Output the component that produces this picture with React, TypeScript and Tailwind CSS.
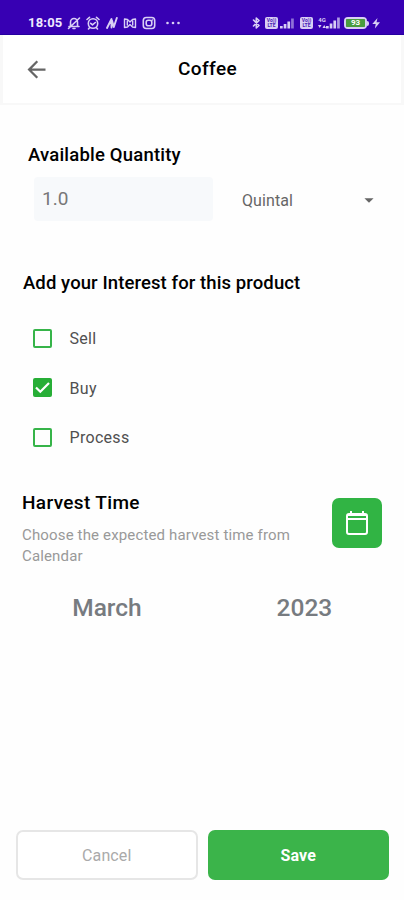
import { useState } from "react"
import type { ReactNode } from "react"
import { MdArrowBack, MdArrowDropDown } from "react-icons/md"

type InterestType = "Sell" | "Buy" | "Process"

const interests: InterestType[] = ["Sell", "Buy", "Process"]

const Glyph = ({ w, className = "", children }: { w: number; className?: string; children: ReactNode }) => (
    <svg
        width={w}
        height={14}
        viewBox={`0 0 ${w} 14`}
        fill="none"
        stroke="currentColor"
        strokeWidth={1.6}
        strokeLinecap="round"
        strokeLinejoin="round"
        className={`shrink-0 ${className}`}
    >
        {children}
    </svg>
)

const VoLte = ({ className = "" }: { className?: string }) => (
    <div className={`w-[13px] h-3 shrink-0 rounded-[2px] bg-[#d9cff5] text-[#4a20b4] flex flex-col items-center justify-center text-[5px] leading-[5px] font-bold ${className}`}>
        <span>Vo))</span>
        <span>LTE</span>
    </div>
)

const StatusBar = () => (
    <div className="h-[35px] bg-[#3700b3] border-b border-[#2500a0] text-[#d9cff5] flex items-center pl-7 pr-[24px] pt-[12px]">
        <span className="w-[35px] text-[13px] leading-4 font-bold tracking-[0.2px] text-[#eee8ff]">18:05</span>
        <Glyph w={14} className="ml-[4px]">
            <path d="M3.500 10.500V6a3.500 3.500 0 0 1 7 0v4.500M2 10.500h10M6 12.500h2M1.500 12.500 12.500 2" />
        </Glyph>
        <Glyph w={14} className="ml-[5px]">
            <circle cx="7" cy="7.500" r="4.700" />
            <path d="M1 3.500 3.500 1.300M13 3.500 10.500 1.300M4.700 7.300l1.800 1.500 2.800-2.300M3.500 11.800l-1 1.200M10.500 11.800l1 1.200" />
        </Glyph>
        <Glyph w={12} className="ml-[6px]">
            <path d="M1 12 5.500 3v8.500M6 4.500l1.800 6.500L10.800 2" strokeWidth="1.900" />
        </Glyph>
        <Glyph w={14} className="ml-[5px]">
            <path d="M1.500 3v8.500l3-.5L7 8.500 9.500 11l3 .5V3l-3 .5L7 6 4.500 3.500zM4.300 5v4M9.700 5v4" strokeWidth="1.400" />
        </Glyph>
        <Glyph w={14} className="ml-[5px]">
            <rect x="1.300" y="1.500" width="11.400" height="11" rx="3" />
            <rect x="4.200" y="4.300" width="5.600" height="5.400" rx="2" />
            <path d="M10.300 4h.1" />
        </Glyph>
        <Glyph w={16} className="ml-[9px]">
            <g fill="currentColor" stroke="none">
                <circle cx="2.500" cy="7" r="1.300" />
                <circle cx="8" cy="7" r="1.300" />
                <circle cx="13.500" cy="7" r="1.300" />
            </g>
        </Glyph>
        <Glyph w={9} className="ml-auto">
            <path d="m1.500 4 5.500 5.500L4.300 12V2L7 4.500 1.500 10" />
        </Glyph>
        <VoLte className="ml-[4px]" />
        <Glyph w={15} className="ml-[2px]">
            <g fill="currentColor" stroke="none">
                <path d="M0 10h2.700v2.500H0zM3.700 8h2.700v4.500H3.700zM7.400 5.500h2.700v7H7.400z" />
                <path d="M11.100 2.500h2.700v10h-2.700z" opacity=".55" />
            </g>
        </Glyph>
        <VoLte className="ml-[5px]" />
        <div className="ml-[5px] w-[8px] h-3 flex flex-col items-center">
            <span className="text-[6px] leading-[6px] font-bold">4G</span>
            <svg width={8} height={6} viewBox="0 0 8 6" fill="currentColor">
                <path d="M0 2h3.500L1.700 5zM4.500 5H8L6.200 2z" />
            </svg>
        </div>
        <Glyph w={14}>
            <g fill="currentColor" stroke="none">
                <path d="M0 10h2.700v2.500H0zM3.700 7.500h2.700v5H3.700zM7.400 4.500h2.700v8H7.400z" />
                <path d="M11.100 1.500h2.700v11h-2.700z" opacity=".75" />
            </g>
        </Glyph>
        <div className="ml-[4px] w-[23px] h-3 shrink-0 border-2 border-[#d9cff5] rounded-[4px] flex">
            <div className="w-full rounded-[1px] bg-[#4a9c3f] text-white text-[8px] leading-[8px] font-bold flex items-center justify-center">93</div>
        </div>
        <div className="w-[2px] h-[5px] bg-[#d9cff5] rounded-r-sm" />
        <Glyph w={8} className="ml-[3px]">
            <path d="M5.500 2 .3 8h3.400L2.900 12.500 8 6.200H4.500z" fill="currentColor" stroke="none" />
        </Glyph>
    </div>
)

const App = () => {
    const [selected, setSelected] = useState<InterestType[]>(["Buy"])

    const toggle = (item: InterestType) => {
        setSelected(selected.includes(item) ? selected.filter((s) => s !== item) : [...selected, item])
    }

    return (
        <div className="w-full h-[900px] flex flex-col bg-[#fefefe] font-[Roboto,sans-serif] text-black">
            <StatusBar />
            <header className="h-[70px] bg-white border-x-[3px] border-b-2 border-[#f8f8f8] grid grid-cols-[1fr_auto_1fr] items-center pt-px">
                <button className="justify-self-start ml-[20px] text-[#666666]">
                    <MdArrowBack size={27} />
                </button>
                <h1 className="text-[19px] font-medium tracking-[0.4px] ml-[11px]">Coffee</h1>
            </header>

            <main className="flex-1 pl-[22px] pr-[22px]">
                <section className="pt-[38px]">
                    <h2 className="pl-[6px] text-[18.500px] leading-6 font-medium tracking-[0.2px]">Available Quantity</h2>
                    <div className="flex items-center mt-[10px] pl-[12px]">
                        <div className="w-[179px] h-[44px] rounded bg-[#f7f9fb] flex items-center pl-[8px] pt-px text-[19px] text-[#777777]">1.0</div>
                        <button className="flex-1 ml-[29px] pt-[3px] flex items-center justify-between text-[16px] text-[#666666]">
                            <span className="tracking-[0.1px]">Quintal</span>
                            <MdArrowDropDown size={22} className="mr-[2px] -mt-[2px]" />
                        </button>
                    </div>
                </section>

                <section className="pt-[50px]">
                    <h2 className="pl-px text-[18.500px] leading-6 font-medium tracking-[0.1px]">Add your Interest for this product</h2>
                    <div className="flex flex-col mt-[19px] pl-[11px]">
                        {interests.map((item) => (
                            <button key={item} onClick={() => toggle(item)} className="h-[49.500px] flex items-center gap-[17px] text-left">
                                {selected.includes(item) ? (
                                    <span className="size-[19px] -mt-px rounded-[2px] bg-[#27ae36] text-white">
                                        <svg width={19} height={19} viewBox="0 0 19 19" fill="none" stroke="currentColor" strokeWidth={2.2}>
                                            <path d="m3 9.500 4.300 4.300L16 4.900" />
                                        </svg>
                                    </span>
                                ) : (
                                    <span className="size-[19px] -mt-px rounded-[2px] border-2 border-[#36b449]" />
                                )}
                                <span className="pt-px pl-[0.5px] text-[16px] text-[#505050] tracking-[0.3px]">{item}</span>
                            </button>
                        ))}
                    </div>
                </section>

                <section className="pt-[28px]">
                    <div className="flex items-start justify-between">
                        <div className="w-[285px]">
                            <h2 className="text-[19px] leading-6 font-medium tracking-[0.35px]">Harvest Time</h2>
                            <p className="mt-[10px] text-[15px] leading-[21px] tracking-[0.15px] text-[#999999]">Choose the expected harvest time from Calendar</p>
                        </div>
                        <button className="mt-[7px] size-[50px] rounded-[7px] bg-[#31b444] text-white flex items-center justify-center">
                            <svg width={24} height={26} viewBox="0 0 24 26" fill="none" stroke="currentColor" strokeWidth={2}>
                                <rect x="2" y="4" width="20" height="20" rx="2" />
                                <path d="M2 9h20M6 1v4M18 1v4" />
                                <path d="M2 5h20" />
                            </svg>
                        </button>
                    </div>
                    <div className="flex mt-[23px] text-[24.500px] leading-[36px] font-medium text-[#777b80]">
                        <span className="w-[170px] pl-[4px] text-center">March</span>
                        <span className="ml-[27px] w-[171px] pl-[12px] text-center">2023</span>
                    </div>
                </section>
            </main>

            <footer className="grid grid-cols-2 gap-[10px] pl-[16px] pr-[15px] pb-[20px]">
                <button className="h-[50px] rounded-[7px] border-2 border-[#e6e6e6] bg-white pt-[2px] text-[16px] tracking-[0.1px] text-[#aaaaaa]">Cancel</button>
                <button className="h-[50px] rounded-[7px] bg-[#3bb44a] pt-[2px] text-[16px] font-bold tracking-[0.1px] text-white">Save</button>
            </footer>
        </div>
    )
}

export default App
